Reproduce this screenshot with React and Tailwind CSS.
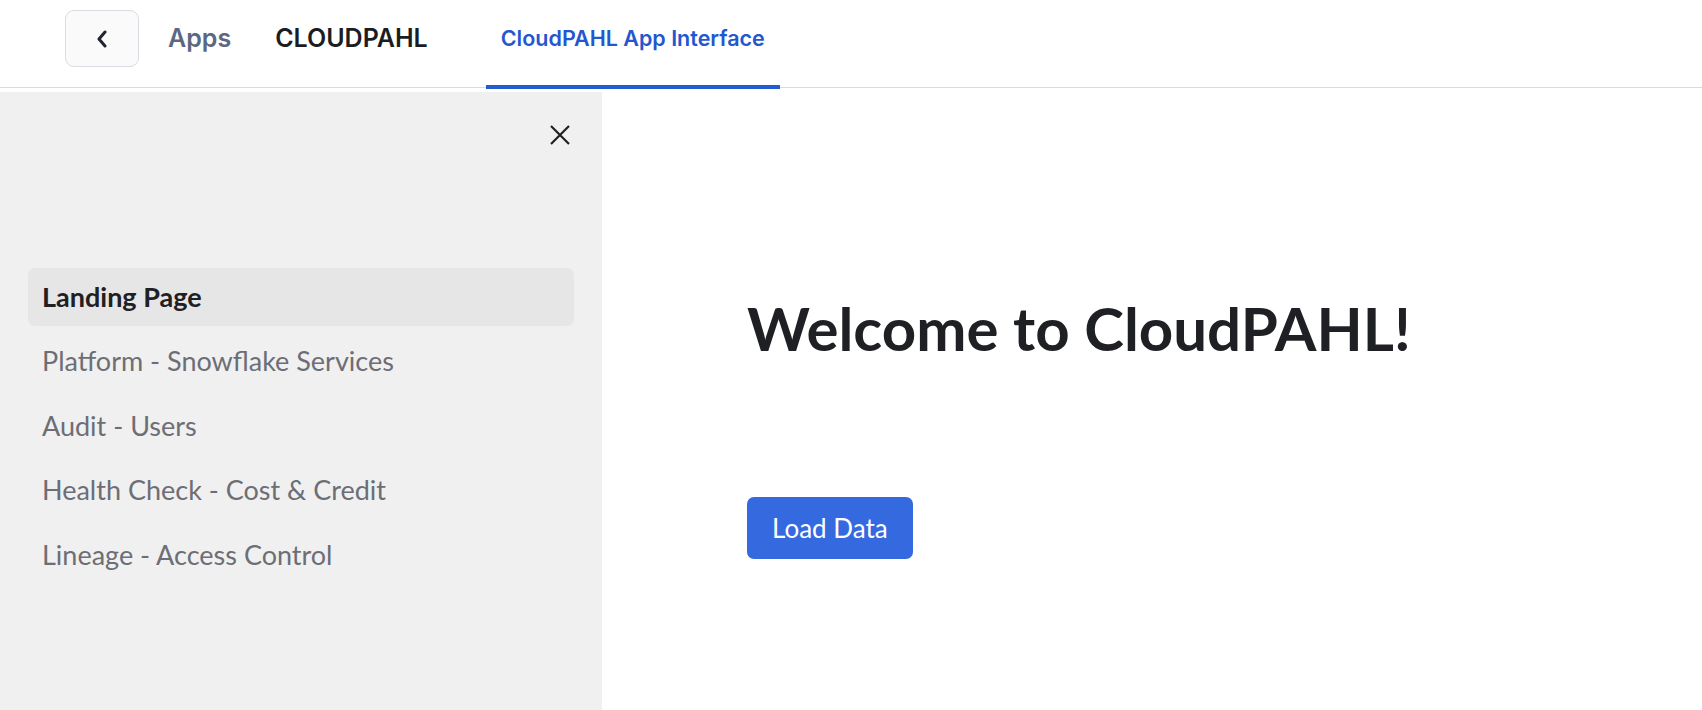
import React, { useState } from 'react';

const NAV_ITEMS = [
  'Landing Page',
  'Platform - Snowflake Services',
  'Audit - Users',
  'Health Check - Cost & Credit',
  'Lineage - Access Control',
];

export default function App() {
  const [active, setActive] = useState('Landing Page');

  return (
    <div className="h-screen w-full bg-white flex flex-col overflow-hidden">
      {/* --- TOP BAR --- */}
      <header className="flex h-[88px] shrink-0 border-b border-[#d8dae2] pl-[65px] font-['Inter',sans-serif]">
        <div className="flex items-center pb-[10px]">
          <button className="w-[74px] h-[57px] rounded-[9px] border border-[#d9dce3] bg-[#fafafa] flex items-center justify-center text-[#1f2430]">
            <svg width="12" height="18" viewBox="0 0 12 18" fill="none">
              <path d="M9 2L3 9l6 7" stroke="currentColor" strokeWidth="3" strokeLinecap="round" strokeLinejoin="round" />
            </svg>
          </button>
        </div>
        <div className="flex items-center pb-[10px] ml-[29px] text-[25px] font-semibold text-[#5c6882]">Apps</div>
        <div className="flex items-center pb-[10px] ml-[44px] text-[25px] font-semibold text-[#1b1d22]">CLOUDPAHL</div>
        <div className="flex items-center pb-[9px] ml-[58px] px-[15px] -mb-[2px] border-b-4 border-[#245bd1] text-[21.5px] font-semibold text-[#2457cf]">
          CloudPAHL App Interface
        </div>
      </header>

      {/* --- BODY --- */}
      <div className="flex flex-1 min-h-0 pt-[4px] font-['Lato',sans-serif]">
        <aside className="w-[602px] shrink-0 bg-[#f0f0f0] flex flex-col">
          <div className="flex justify-end pt-[32px] pr-[31px]">
            <svg width="22" height="22" viewBox="0 0 22 22" fill="none" className="text-[#1f2024]">
              <path d="M2 2l18 18M20 2L2 20" stroke="currentColor" strokeWidth="2.2" />
            </svg>
          </div>
          <nav className="mt-[122px] px-[28px] flex flex-col gap-[6.5px]">
            {NAV_ITEMS.map((item) => (
              <button
                key={item}
                onClick={() => setActive(item)}
                className={`h-[58px] rounded-[7px] px-[14px] text-left text-[27px] ${
                  active === item ? 'bg-[#e6e6e6] font-bold text-[#1f2024]' : 'text-[#6d6e75]'
                }`}
              >
                {item}
              </button>
            ))}
          </nav>
        </aside>

        <main className="flex-1 pl-[145px] pt-[200px]">
          <h1 className="text-[60px] font-bold text-[#1f2024] leading-[72px]">Welcome to CloudPAHL!</h1>
          <button className="mt-[133px] h-[62px] px-[25px] rounded-[7px] bg-[#3569e0] text-white text-[26px]">
            Load Data
          </button>
        </main>
      </div>
    </div>
  );
}
